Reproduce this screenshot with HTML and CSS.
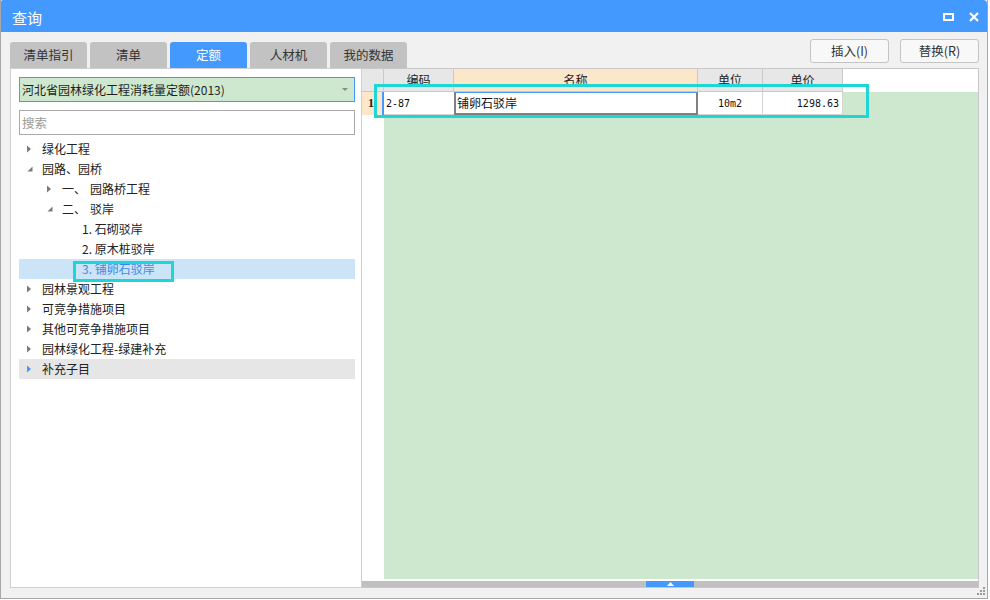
FILE: index.html
```html
<!DOCTYPE html>
<html lang="zh-CN">
<head>
<meta charset="utf-8">
<title>查询</title>
<link rel="stylesheet" href="styles.css">
</head>
<body>
<div class="window">
  <div class="titlebar">
    <span class="title">查询</span>
    <div class="win-ctrls">
      <svg class="ic-max" width="11" height="8" viewBox="0 0 11 8"><rect x="1" y="1" width="9" height="6" fill="none" stroke="#fff" stroke-width="2"/></svg>
      <svg class="ic-close" width="10" height="10" viewBox="0 0 10 10"><path d="M1 1L9 9M9 1L1 9" stroke="#fff" stroke-width="2.2"/></svg>
    </div>
  </div>

  <div class="toolbar">
    <div class="tabs">
      <div class="tab">清单指引</div>
      <div class="tab">清单</div>
      <div class="tab active">定额</div>
      <div class="tab">人材机</div>
      <div class="tab">我的数据</div>
    </div>
    <div class="buttons">
      <button class="btn">插入(I)</button>
      <button class="btn">替换(R)</button>
    </div>
  </div>

  <div class="content">
    <div class="left-panel">
      <div class="select">
        <span class="select-text">河北省园林绿化工程消耗量定额(2013)</span>
        <svg class="select-arrow" width="6" height="3" viewBox="0 0 6 3"><path d="M0 0H6L3 3Z" fill="#8a8a8a"/></svg>
      </div>
      <div class="search">搜索</div>
      <ul class="tree">
        <li class="node l0"><span class="arr"><svg width="5" height="8" viewBox="0 0 5 8"><path d="M0 0.5L4 4L0 7.5Z" fill="#7a7a7a"/></svg></span><span>绿化工程</span></li>
        <li class="node l0"><span class="arr"><svg width="6" height="6" viewBox="0 0 6 6"><path d="M5.5 0.5V5.5H0.5Z" fill="#7a7a7a"/></svg></span><span>园路、园桥</span></li>
        <li class="node l1"><span class="arr"><svg width="5" height="8" viewBox="0 0 5 8"><path d="M0 0.5L4 4L0 7.5Z" fill="#7a7a7a"/></svg></span><span class="num">一、</span><span>园路桥工程</span></li>
        <li class="node l1"><span class="arr"><svg width="6" height="6" viewBox="0 0 6 6"><path d="M5.5 0.5V5.5H0.5Z" fill="#7a7a7a"/></svg></span><span class="num">二、</span><span>驳岸</span></li>
        <li class="node l2"><span>1. 石砌驳岸</span></li>
        <li class="node l2"><span>2. 原木桩驳岸</span></li>
        <li class="node l2 selected"><span>3. 铺卵石驳岸</span><span class="mark tree-mark"></span></li>
        <li class="node l0"><span class="arr"><svg width="5" height="8" viewBox="0 0 5 8"><path d="M0 0.5L4 4L0 7.5Z" fill="#7a7a7a"/></svg></span><span>园林景观工程</span></li>
        <li class="node l0"><span class="arr"><svg width="5" height="8" viewBox="0 0 5 8"><path d="M0 0.5L4 4L0 7.5Z" fill="#7a7a7a"/></svg></span><span>可竞争措施项目</span></li>
        <li class="node l0"><span class="arr"><svg width="5" height="8" viewBox="0 0 5 8"><path d="M0 0.5L4 4L0 7.5Z" fill="#7a7a7a"/></svg></span><span>其他可竞争措施项目</span></li>
        <li class="node l0"><span class="arr"><svg width="5" height="8" viewBox="0 0 5 8"><path d="M0 0.5L4 4L0 7.5Z" fill="#7a7a7a"/></svg></span><span>园林绿化工程-绿建补充</span></li>
        <li class="node l0 hover"><span class="arr"><svg width="5" height="8" viewBox="0 0 5 8"><path d="M0 0.5L4 4L0 7.5Z" fill="#4499ff"/></svg></span><span>补充子目</span></li>
      </ul>
    </div>

    <div class="grid">
      <div class="ghead">
        <div class="hc corner"></div>
        <div class="hc w1">编码</div>
        <div class="hc w2 peach">名称</div>
        <div class="hc w3">单位</div>
        <div class="hc w4">单价</div>
      </div>
      <div class="gbody">
        <div class="rncol">
          <div class="rn">1</div>
        </div>
        <div class="garea">
          <div class="grow">
            <div class="cell w1 code">2-87</div>
            <div class="cell w2 name">铺卵石驳岸</div>
            <div class="cell w3 unit">10m2</div>
            <div class="cell w4 price">1298.63</div>
          </div>
        </div>
      </div>
      <div class="gspacer"></div>
      <div class="hscroll">
        <div class="thumb"><svg width="7" height="4" viewBox="0 0 7 4"><path d="M3.5 0L7 4H0Z" fill="#fff"/></svg></div>
      </div>
      <span class="mark grid-mark"></span>
    </div>
  </div>

  <svg class="grip" width="9" height="9" viewBox="0 0 9 9">
    <rect x="6" y="0" width="2" height="2" fill="#9a9a9a"/>
    <rect x="3" y="3" width="2" height="2" fill="#9a9a9a"/>
    <rect x="6" y="3" width="2" height="2" fill="#9a9a9a"/>
    <rect x="0" y="6" width="2" height="2" fill="#9a9a9a"/>
    <rect x="3" y="6" width="2" height="2" fill="#9a9a9a"/>
    <rect x="6" y="6" width="2" height="2" fill="#9a9a9a"/>
  </svg>
</div>
</body>
</html>
```

FILE: styles.css
```css
* { box-sizing: border-box; }

html, body {
  margin: 0;
  padding: 0;
  background: #ffffff;
}

body {
  width: 990px;
  height: 600px;
  overflow: hidden;
  font-family: "Noto Sans CJK SC", "Microsoft YaHei", sans-serif;
  font-size: 12px;
  color: #222;
}

.window {
  position: relative;
  width: 988px;
  height: 599px;
  background: #f1f1f1;
  border-left: 1px solid #a7a7a7;
  border-right: 1px solid #a7a7a7;
  border-bottom: 1px solid #a7a7a7;
  display: flex;
  flex-direction: column;
}

/* title bar */
.titlebar {
  height: 32px;
  flex: none;
  background: #4499ff;
  display: flex;
  align-items: center;
  justify-content: space-between;
  padding: 0 8px 0 11px;
  border-radius: 2px 4px 0 0;
}

.title {
  color: #fff;
  font-size: 15px;
  line-height: 20px;
  padding-top: 3px;
}

.win-ctrls {
  display: flex;
  align-items: center;
  gap: 15px;
  padding-top: 1px;
}

.ic-max, .ic-close { display: block; }

/* toolbar with tabs + buttons */
.toolbar {
  height: 36px;
  flex: none;
  display: flex;
  justify-content: space-between;
  padding: 0 8px 0 9px;
}

.tabs {
  display: flex;
  align-items: flex-end;
  gap: 3px;
}

.tab {
  width: 77px;
  height: 26px;
  background: #c2c2c2;
  border-radius: 3px 3px 0 0;
  color: #333;
  font-size: 12.5px;
  line-height: 26px;
  text-align: center;
}

.tab.active {
  background: #4499ff;
  color: #fff;
}

.buttons {
  display: flex;
  gap: 11px;
  padding-top: 7px;
}

.btn {
  width: 79px;
  height: 24px;
  background: #f8f8f8;
  border: 1px solid #c4c4c4;
  border-radius: 3px;
  font-family: "Noto Sans CJK SC", "Microsoft YaHei", sans-serif;
  font-size: 12.5px;
  color: #333;
  padding: 0;
  line-height: 22px;
}

/* content */
.content {
  height: 520px;
  flex: none;
  display: flex;
  padding: 0 8px 0 9px;
}

.left-panel {
  width: 352px;
  flex: none;
  background: #fff;
  border: 1px solid #cfcfcf;
  padding: 8px 6px 0 8px;
}

.select {
  height: 25px;
  border: 1px solid #4499ff;
  background: #cde8cf;
  display: flex;
  align-items: center;
  justify-content: space-between;
  padding: 0 6px 0 2px;
}

.select-text {
  font-size: 12px;
  line-height: 20px;
  color: #1e1e1e;
}

.select-arrow { display: block; }

.search {
  margin-top: 8px;
  height: 25px;
  border: 1px solid #a9a9a9;
  color: #9a9a9a;
  font-size: 12.5px;
  line-height: 23px;
  padding-left: 2px;
}

.tree {
  list-style: none;
  margin: 4px 0 0 0;
  padding: 0;
}

.node {
  position: relative;
  height: 20px;
  display: flex;
  align-items: center;
  font-size: 12px;
  line-height: 20px;
  color: #222;
  white-space: nowrap;
}

.node.l0 { padding-left: 8px; }
.node.l1 { padding-left: 28px; }
.node.l2 { padding-left: 63px; }

.arr {
  width: 15px;
  flex: none;
  display: flex;
  align-items: center;
}

.arr svg { display: block; }

.num { margin-right: 4px; }

.node.selected {
  background: #cce4f7;
  color: #3d8ae6;
}

.node.hover {
  background: #e6e6e6;
}

.mark {
  position: absolute;
  display: block;
  border: 3px solid #1fd6d6;
  pointer-events: none;
}

.tree-mark {
  left: 54px;
  top: 2px;
  width: 101px;
  height: 21px;
  border-width: 3px;
}

/* grid */
.grid {
  position: relative;
  flex: 1;
  display: flex;
  flex-direction: column;
  background: #fff;
  border-top: 1px solid #c8c8c8;
  border-right: 1px solid #c8c8c8;
  border-bottom: 1px solid #c8c8c8;
}

.ghead {
  height: 23px;
  flex: none;
  display: flex;
}

.hc {
  height: 23px;
  background: #e7e7e7;
  border-right: 1px solid #c9c9c9;
  border-bottom: 1px solid #c9c9c9;
  font-size: 12px;
  line-height: 22px;
  text-align: center;
  color: #222;
}

.hc.peach { background: #fde7cb; }

.corner { width: 22px; }
.w1 { width: 70px; }
.w2 { width: 244px; }
.w3 { width: 65px; }
.w4 { width: 80px; }

.gbody {
  flex: 1;
  display: flex;
}

.rncol {
  width: 22px;
  flex: none;
  background: #fff;
}

.rn {
  height: 23px;
  background: #fde7cb;
  border-right: 2px solid #4499ff;
  font-family: "Liberation Serif", serif;
  font-weight: bold;
  font-size: 12px;
  line-height: 23px;
  padding-left: 6px;
  color: #222;
}

.garea {
  flex: 1;
  background: #cde8cf;
}

.grow {
  display: flex;
  height: 23px;
}

.cell {
  height: 23px;
  background: #fff;
  line-height: 23px;
  white-space: nowrap;
}

.code, .unit, .price {
  font-family: "DejaVu Sans Mono", "Liberation Mono", monospace;
  font-size: 10px;
  color: #111;
}

.code {
  padding-left: 2px;
  border-bottom: 1px solid #d4d4d4;
}

.name {
  border-left: 2px solid #808080;
  border-right: 2px solid #808080;
  border-bottom: 2px solid #808080;
  border-top: 1px solid #4499ff;
  padding-left: 1px;
  font-size: 12px;
  line-height: 19px;
  color: #111;
}

.unit {
  text-align: center;
  border-right: 1px solid #d4d4d4;
  border-bottom: 1px solid #d4d4d4;
}

.price {
  text-align: right;
  padding-right: 3px;
  border-right: 1px solid #d4d4d4;
  border-bottom: 1px solid #d4d4d4;
}

.gspacer {
  height: 2px;
  flex: none;
  background: #fff;
}

.hscroll {
  height: 6px;
  flex: none;
  background: #c0c0c0;
  padding-left: 284px;
  display: flex;
}

.thumb {
  width: 48px;
  height: 6px;
  background: #4499ff;
  display: flex;
  align-items: center;
  justify-content: center;
}

.thumb svg { display: block; }

.grid-mark {
  left: 12px;
  top: 15px;
  width: 495px;
  height: 34px;
}

.grip {
  position: absolute;
  right: 1px;
  bottom: 2px;
  display: block;
}
```
